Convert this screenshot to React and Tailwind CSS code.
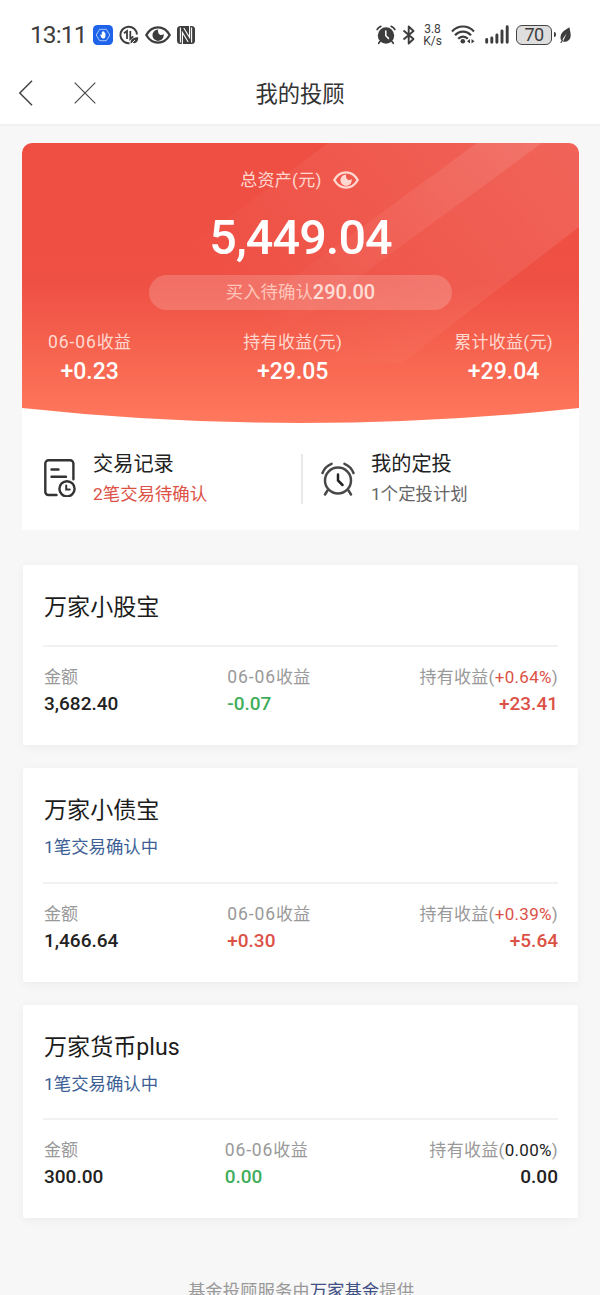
const funds = [
  {
    name: '万家小股宝',
    amount: '3,682.40',
    daily: '-0.07',
    dailyColor: 'text-[#41ae5b]',
    rate: '+0.64%',
    total: '+23.41',
    totalColor: 'text-[#dc5146]',
  },
  {
    name: '万家小债宝',
    pending: '1笔交易确认中',
    amount: '1,466.64',
    daily: '+0.30',
    dailyColor: 'text-[#dc5146]',
    rate: '+0.39%',
    total: '+5.64',
    totalColor: 'text-[#dc5146]',
  },
  {
    name: '万家货币plus',
    pending: '1笔交易确认中',
    amount: '300.00',
    daily: '0.00',
    dailyColor: 'text-[#41ae5b]',
    rate: '0.00%',
    total: '0.00',
    totalColor: 'text-[#222]',
  },
];

const stats = [
  { label: '收益', date: '06-06', value: '+0.23' },
  { label: '持有收益(元)', value: '+29.05' },
  { label: '累计收益(元)', value: '+29.04' },
];

const EyeIcon = ({ className }) => (
  <svg viewBox="0 0 26 18" className={className} fill="none">
    <path d="M1.3 9C4 4.2 8 1.4 13 1.4S22 4.2 24.7 9C22 13.8 18 16.6 13 16.6S4 13.8 1.3 9Z" stroke="currentColor" strokeWidth="2.3" />
    <path d="M13.2 3.5a5.7 5.7 0 1 0 5.5 4.5c-1.5 1.6-4.3 1.2-5.2-.8-.6-1.3-.5-2.6-.3-3.7Z" fill="currentColor" />
  </svg>
);

const StatusBar = () => (
  <div className="flex h-[62px] items-center pt-[7px] pl-[30px] pr-[29px] text-[#3d3d3d]">
    <span className="w-[57px] whitespace-nowrap text-[24.5px] leading-[30px] tracking-[-0.9px] pt-px">13:11</span>
    <svg viewBox="0 0 20 20" className="ml-[6px] h-5 w-5">
      <rect width="20" height="20" rx="4.5" fill="#1f63ea" />
      <path d="M6.6 4.3h6.8l3.4 5.7-3.4 5.7H6.6L3.2 10Z" fill="none" stroke="#b9d1ff" strokeWidth="0.9" />
      <path d="M7.2 9.6c.8-.5 1.2.2 1.6.5V7.2c0-.6.9-.6.9 0v-.8c0-.6.9-.6.9 0v.8c0-.6.9-.6.9 0v.8c0-.5.9-.5.9 0v3.2c0 1.5-1 2.4-2.2 2.4-1.5 0-2.2-1-3-4Z" fill="#fff" />
    </svg>
    <svg viewBox="0 0 20 20" className="ml-[6px] h-5 w-5" fill="none" stroke="currentColor" strokeWidth="2">
      <path d="M10.5 18.2A8.3 8.3 0 1 1 18 9.5" />
      <path d="M5 8.3 8 6v8M11.3 6v8l3-2.6" strokeWidth="1.8" />
      <path d="M11.6 18.5c-.5-4 2.2-6.3 7.6-6.3.2 4.6-2.4 7-6 5.5Z" fill="currentColor" stroke="none" />
      <path d="m12 19 4-4" stroke="#fff" strokeWidth="0.9" />
    </svg>
    <EyeIcon className="ml-[6px] h-[18px] w-[26px]" />
    <svg viewBox="0 0 18 18" className="ml-[6px] h-[18px] w-[18px]">
      <rect width="18" height="18" rx="3.5" fill="currentColor" />
      <path d="M3.4 1.5v15M14.6 1.5v15M5.4 18V6.5l5.8 9.5M12.6 0v11.5L6.8 2" stroke="#fff" strokeWidth="1.1" fill="none" />
    </svg>

    <svg viewBox="0 0 20 20" className="ml-auto h-5 w-5" fill="none" stroke="currentColor" strokeLinecap="round">
      <circle cx="10" cy="10.5" r="8.2" fill="currentColor" stroke="none" />
      <path d="M1.2 4.5C2 3 3.2 2 4.8 1.4M18.8 4.5C18 3 16.8 2 15.2 1.4M4 16.5l-1.3 1.8M16 16.5l1.3 1.8" strokeWidth="1.7" />
      <path d="M9.8 6v4.8l2.7 2.6" stroke="#fff" strokeWidth="1.5" />
    </svg>
    <svg viewBox="0 0 14 20" className="ml-[6px] h-5 w-[14px]" fill="none" stroke="currentColor" strokeWidth="1.9" strokeLinejoin="round">
      <path d="m1.5 5.5 10 8.5-4.8 4.5v-17L11.5 6l-10 8.5" />
    </svg>
    <div className="ml-[6px] w-[21px] text-center text-[12px] leading-[12px]">
      <div>3.8</div>
      <div>K/s</div>
    </div>
    <svg viewBox="0 0 24 19" className="ml-[8px] h-[19px] w-6" fill="none" stroke="currentColor" strokeWidth="2.2">
      <path d="M1 6.5C7-.2 17-.2 23 6.5M4 10.3c4.5-5 11.5-5 16 0M7.2 13.8c2.6-2.9 7-2.9 9.6 0" />
      <circle cx="11.8" cy="16.2" r="2.3" fill="currentColor" stroke="none" />
      <path d="M19 14v4.6L16 16.3ZM20.5 14v4.6l3-2.3Z" fill="currentColor" stroke="none" />
    </svg>
    <svg viewBox="0 0 24 19" className="ml-[10px] h-[19px] w-6" stroke="currentColor" strokeWidth="2.9" strokeLinecap="round">
      <path d="M1.7 14.5v2.7M6.8 13v4.2M11.9 10v7.2M17 6v11.2M22.2 1.7v15.5" />
    </svg>
    <div className="ml-[7px] flex h-5 w-[36px] items-center justify-center rounded-[6px] border-[1.5px] border-[#444] bg-[#dedede] text-[18px] leading-none tracking-[-0.5px]">
      70
    </div>
    <div className="ml-[2px] h-[5px] w-[2px] rounded-r bg-[#444]" />
    <svg viewBox="0 0 11 16" className="ml-[4px] h-4 w-[11px]">
      <path d="M9.5.3C3.5 3.5.5 6.5.5 10.5c0 1.5.4 2.4 1 3.3L6.5 6.5 3 14.7c5 .8 8-2.5 7.7-7.2C10.6 5 9.7 3 9.5.3Z" fill="currentColor" />
      <path d="m.7 15.8 2.5-3.3" stroke="currentColor" strokeWidth="1.2" />
    </svg>
  </div>
);

const NavBar = () => (
  <div className="grid h-[64px] grid-cols-[1fr_auto_1fr] items-center border-b-2 border-[#f0f1f1] px-[18px]">
    <div className="flex items-center gap-[40px] text-[#444]">
      <svg viewBox="0 0 16 26" className="h-[26px] w-4" fill="none" stroke="currentColor" strokeWidth="1.5">
        <path d="M14 .8 1.8 13 14 25.2" />
      </svg>
      <svg viewBox="0 0 22 22" className="h-[22px] w-[22px]" fill="none" stroke="currentColor" strokeWidth="1.1">
        <path d="m.7.7 20.6 20.6M21.3.7.7 21.3" />
      </svg>
    </div>
    <h1 className="pt-[2px] text-[22.3px] leading-8 text-[#333]">我的投顾</h1>
  </div>
);

const HeroBackground = () => (
  <svg viewBox="0 0 557 280" className="absolute inset-0 h-[280px] w-full">
    <defs>
      <linearGradient id="base" x1="0" y1="0" x2="0" y2="1">
        <stop offset="0" stopColor="#ef4f43" />
        <stop offset="0.5" stopColor="#ef5044" />
        <stop offset="0.75" stopColor="#f6644f" />
        <stop offset="1" stopColor="#ff785d" />
      </linearGradient>
      <linearGradient id="beam" gradientUnits="userSpaceOnUse" x1="520" y1="0" x2="270" y2="220">
        <stop offset="0" stopColor="#fff" stopOpacity="0.11" />
        <stop offset="1" stopColor="#fff" stopOpacity="0" />
      </linearGradient>
      <clipPath id="arc">
        <path d="M0 10A10 10 0 0 1 10 0H547A10 10 0 0 1 557 10V265Q278.5 295 0 265Z" />
      </clipPath>
    </defs>
    <g clipPath="url(#arc)">
      <rect width="557" height="280" fill="url(#base)" />
      <path d="M306 0H557V84L380 220H14Z" fill="url(#beam)" />
      <path d="M455 0H520L240 205H175Z" fill="url(#beam)" />
    </g>
  </svg>
);

const DateText = ({ children }) => <span className="text-[17.5px] tracking-[0.9px]">{children}</span>;

const AssetCard = () => (
  <section className="relative h-[387px] rounded-t-[10px] bg-white">
    <HeroBackground />
    <div className="relative flex h-[280px] flex-col items-center pt-[24px] text-white">
      <div className="flex h-[26px] items-center gap-[11px] pr-[2px] text-[17px] tracking-[0.3px] text-[#ffd9d1]">
        <span className="pt-[2px]">总资产(元)</span>
        <EyeIcon className="h-[18px] w-[26px]" />
      </div>
      <div className="mt-[15px] h-[60px] whitespace-nowrap text-[48.5px] font-medium leading-[60px] tracking-[-0.9px]">5,449.04</div>
      <div className="mt-[7px] flex h-[35px] w-[303px] items-center justify-center rounded-full bg-white/18 text-[17.4px] text-[#ffc6bb]">
        买入待确认<span className="-mt-[2px] text-[20px] font-medium text-[#ffddd6]">290.00</span>
      </div>
      <div className="mt-[18px] flex w-full justify-between px-[26px] text-center">
        {stats.map((s) => (
          <div key={s.value}>
            <div className="h-[29px] text-[17px] leading-[28px] tracking-[0.3px] text-[#ffd9d1]">
              {s.date && <DateText>{s.date}</DateText>}
              {s.label}
            </div>
            <div className="h-[30px] text-[23px] font-medium leading-[30px]">{s.value}</div>
          </div>
        ))}
      </div>
    </div>
    <div className="flex h-[107px] pt-[26px]">
      <div className="flex w-[279px] pl-[22px]">
        <svg viewBox="0 0 32 38" className="mt-[10px] h-[38px] w-8" fill="none" stroke="#333" strokeWidth="2.4" strokeLinecap="round">
          <path d="M12.5 36H4.5A3.2 3.2 0 0 1 1.3 32.8V4.5A3.2 3.2 0 0 1 4.5 1.3h21.7a3.2 3.2 0 0 1 3.2 3.2v15.7M7.5 10.5h7M7.5 17.8h14.5" />
          <circle cx="23" cy="29.8" r="7.6" />
          <path d="M22.2 26.5v4h3.5" strokeWidth="2" />
        </svg>
        <div className="ml-[17px]">
          <div className="h-[30px] text-[20.2px] leading-[31px] text-[#222]">交易记录</div>
          <div className="h-[30px] text-[17.4px] leading-[31px] text-[#dc5146]">2笔交易待确认</div>
        </div>
      </div>
      <div className="mt-[5px] h-[50px] w-[2px] bg-[#e8e8e8]" />
      <div className="flex pl-[18px]">
        <svg viewBox="0 0 34 34" className="mt-[13px] h-[34px] w-[34px]" fill="none" stroke="#484848" strokeWidth="2.5" strokeLinecap="round">
          <circle cx="17" cy="18.5" r="13" />
          <path d="M1.5 11C3.2 6.5 6 3.6 10.5 1.8M32.5 11C30.8 6.5 28 3.6 23.5 1.8M6.5 28.5 4 32.5M27.5 28.5l2.5 4" />
          <path d="M17 12.5v6l4.5 4.5" stroke="#222" />
        </svg>
        <div className="ml-[16px]">
          <div className="h-[30px] text-[20.2px] leading-[31px] text-[#222]">我的定投</div>
          <div className="h-[30px] text-[17.4px] leading-[31px] text-[#666]">1个定投计划</div>
        </div>
      </div>
    </div>
  </section>
);

const FundCard = ({ fund }) => (
  <section className="rounded-[2px] bg-white px-[20px] pt-[22px] pb-[27px] shadow-[0_2px_10px_rgba(0,0,0,0.05)]">
    <h2 className="h-[40px] pl-px text-[23.1px] leading-[42px] text-[#1c1c1c]">{fund.name}</h2>
    {fund.pending && (
      <div className="mt-[4px] -mb-[0.5px] h-[30px] pl-px text-[17.4px] leading-[26px] text-[#3d5f95]">{fund.pending}</div>
    )}
    <div className="mt-[18px] border-t-2 border-[#f1f1f1]" />
    <div className="mt-[16px] flex justify-between pl-px text-[17px] text-[#999]">
      <div>
        <div className="h-[27px] leading-[29px]">金额</div>
        <div className="h-[28px] text-[19px] font-medium leading-[28px] text-[#222]">{fund.amount}</div>
      </div>
      <div>
        <div className="h-[27px] leading-[29px] tracking-[0.3px]">
          <DateText>06-06</DateText>收益
        </div>
        <div className={`h-[28px] text-[19px] font-medium leading-[28px] ${fund.dailyColor}`}>{fund.daily}</div>
      </div>
      <div className="text-right">
        <div className="h-[27px] leading-[29px] tracking-[0.3px]">
          持有收益(<span className={fund.totalColor}>{fund.rate}</span>)
        </div>
        <div className={`h-[28px] text-[19px] font-medium leading-[28px] ${fund.totalColor}`}>{fund.total}</div>
      </div>
    </div>
  </section>
);

export default function App() {
  return (
    <div className="h-[1295px] w-[600px] overflow-hidden bg-[#f7f7f7] font-['Roboto','Noto_Sans_CJK_SC',sans-serif]">
      <header className="bg-white">
        <StatusBar />
        <NavBar />
      </header>
      <main className="pt-[17px] pl-[22px] pr-[21px]">
        <AssetCard />
        <div className="mx-px mt-[35px] flex flex-col gap-[23px]">
          {funds.map((fund) => (
            <FundCard key={fund.name} fund={fund} />
          ))}
        </div>
      </main>
      <footer className="mt-[60px] pl-[2px] text-center text-[17.4px] leading-[27px] text-[#999]">
        基金投顾服务由<span className="text-[#3f5085]">万家基金</span>提供
      </footer>
    </div>
  );
}
